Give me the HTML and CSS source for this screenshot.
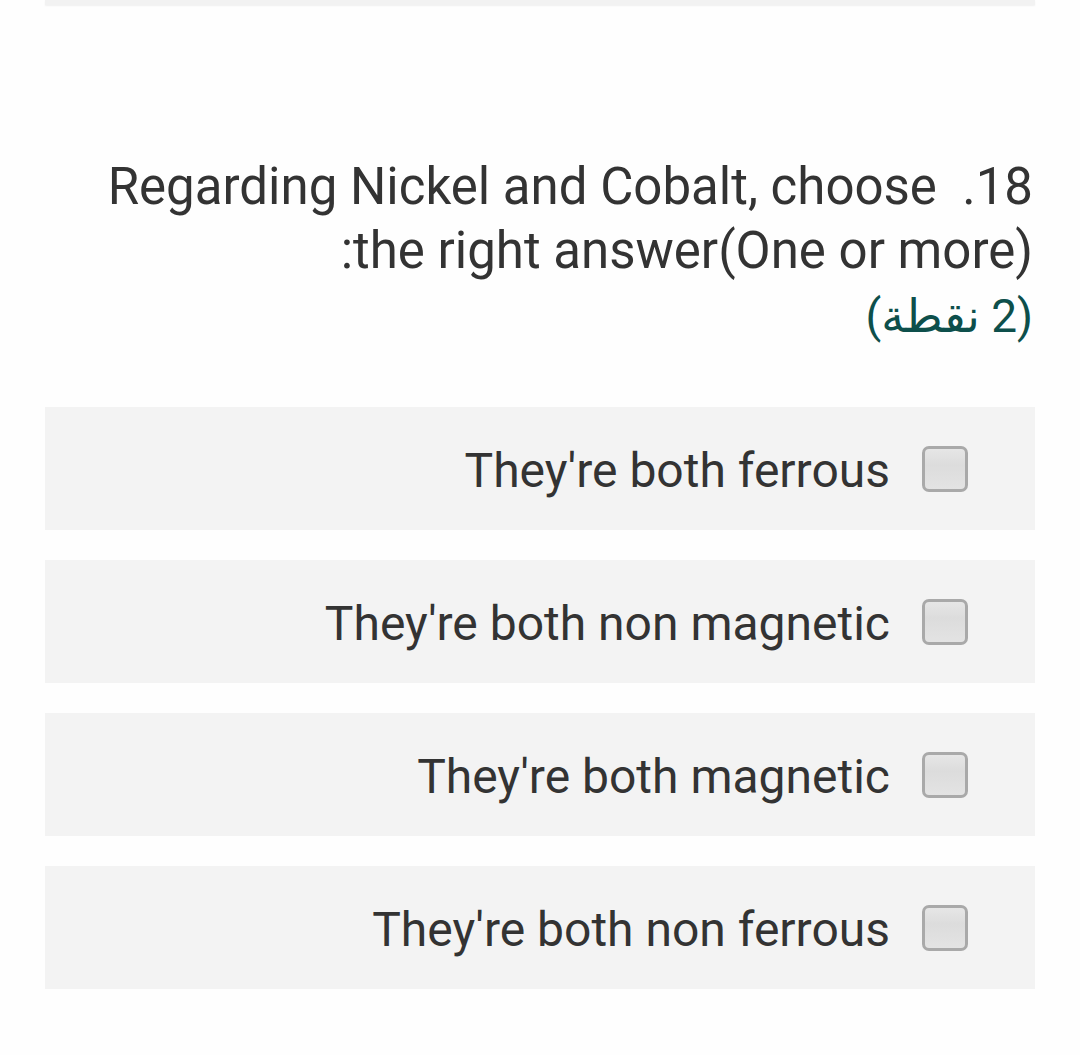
FILE: index.html
```html
<!DOCTYPE html>
<html lang="ar" dir="rtl">
<head>
<meta charset="utf-8">
<link rel="stylesheet" href="styles.css">
</head>
<body>
<div class="page">
  <div class="prev-card"></div>
  <div class="question">
    <div class="title">18.&nbsp; Regarding Nickel and Cobalt, choose the right answer(One or more):</div>
    <div class="points">(2 نقطة)</div>
  </div>
  <div class="options">
    <label class="option"><span class="box"></span><span class="text" dir="ltr">They're both ferrous</span></label>
    <label class="option"><span class="box"></span><span class="text" dir="ltr">They're both non magnetic</span></label>
    <label class="option"><span class="box"></span><span class="text" dir="ltr">They're both magnetic</span></label>
    <label class="option"><span class="box"></span><span class="text" dir="ltr">They're both non ferrous</span></label>
  </div>
</div>
</body>
</html>
```
FILE: styles.css
```css
html, body {
  margin: 0;
  padding: 0;
  background: #fefefe;
}
body {
  font-family: Roboto, "Noto Sans", "DejaVu Sans", sans-serif;
  color: #333333;
}
.page {
  padding: 0 45px;
}
.prev-card {
  height: 5px;
  background: #f2f2f2;
  box-shadow: 0 1px 2px rgba(0,0,0,0.06);
}
.question {
  padding: 150px 2px 0 0;
}
.title {
  font-size: 51px;
  line-height: 64px;
}
.points {
  font-size: 46px;
  line-height: 66px;
  color: #0d4f4b;
  font-family: Roboto, "DejaVu Sans", sans-serif;
}
.options {
  margin-top: 58px;
  display: flex;
  flex-direction: column;
  gap: 30px;
}
.option {
  display: flex;
  align-items: center;
  height: 123px;
  background: #f3f3f3;
  padding-right: 67px;
  gap: 32px;
}
.box {
  width: 40px;
  height: 40px;
  border: 3px solid #a9a9a9;
  border-radius: 7px;
  background: linear-gradient(#e6e6e6, #dcdcdc 40%, #e3e3e3);
  flex: none;
}
.text {
  font-size: 48px;
  color: #333333;
  padding-top: 4px;
}
```
